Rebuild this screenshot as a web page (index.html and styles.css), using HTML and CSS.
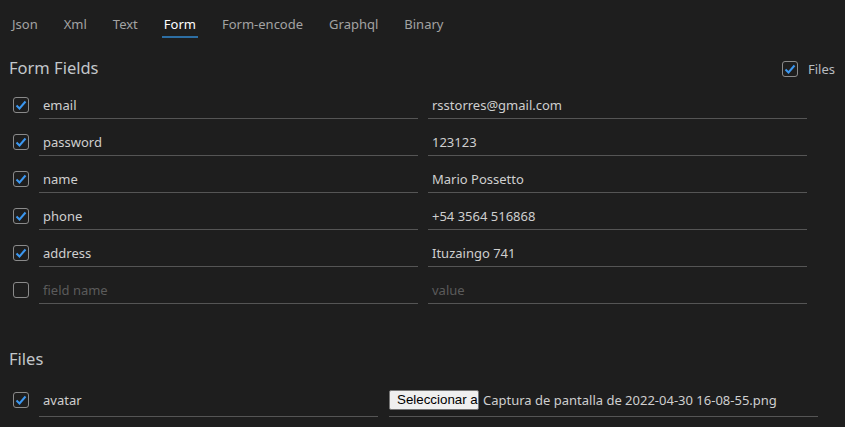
FILE: index.html
```html
<!DOCTYPE html>
<html>
<head>
<meta charset="utf-8">
<link rel="stylesheet" href="styles.css">
</head>
<body>
<div class="page">
  <nav class="tabs">
    <span class="tab">Json</span>
    <span class="tab">Xml</span>
    <span class="tab">Text</span>
    <span class="tab active">Form</span>
    <span class="tab">Form-encode</span>
    <span class="tab">Graphql</span>
    <span class="tab">Binary</span>
  </nav>

  <div class="section-head">
    <h2 class="title">Form Fields</h2>
    <label class="toggle">
      <span class="cb checked"><svg viewBox="0 0 16 16"><polyline points="3.5,8.5 6.5,11.5 12.5,4.5"/></svg></span>
      <span class="toggle-label">Files</span>
    </label>
  </div>

  <div class="rows">
    <div class="row">
      <span class="cb checked"><svg viewBox="0 0 16 16"><polyline points="3.5,8.5 6.5,11.5 12.5,4.5"/></svg></span>
      <div class="field">email</div>
      <div class="field">rsstorres@gmail.com</div>
    </div>
    <div class="row">
      <span class="cb checked"><svg viewBox="0 0 16 16"><polyline points="3.5,8.5 6.5,11.5 12.5,4.5"/></svg></span>
      <div class="field">password</div>
      <div class="field">123123</div>
    </div>
    <div class="row">
      <span class="cb checked"><svg viewBox="0 0 16 16"><polyline points="3.5,8.5 6.5,11.5 12.5,4.5"/></svg></span>
      <div class="field">name</div>
      <div class="field">Mario Possetto</div>
    </div>
    <div class="row">
      <span class="cb checked"><svg viewBox="0 0 16 16"><polyline points="3.5,8.5 6.5,11.5 12.5,4.5"/></svg></span>
      <div class="field">phone</div>
      <div class="field">+54 3564 516868</div>
    </div>
    <div class="row">
      <span class="cb checked"><svg viewBox="0 0 16 16"><polyline points="3.5,8.5 6.5,11.5 12.5,4.5"/></svg></span>
      <div class="field">address</div>
      <div class="field">Ituzaingo 741</div>
    </div>
    <div class="row">
      <span class="cb"></span>
      <div class="field placeholder">field name</div>
      <div class="field placeholder">value</div>
    </div>
  </div>

  <div class="section-head files-head">
    <h2 class="title">Files</h2>
  </div>

  <div class="file-row">
    <span class="cb checked"><svg viewBox="0 0 16 16"><polyline points="3.5,8.5 6.5,11.5 12.5,4.5"/></svg></span>
    <div class="field fname">avatar</div>
    <div class="field ffile">
      <span class="file-btn"><span class="file-btn-text">Seleccionar archivo</span></span>
      <span class="file-name">Captura de pantalla de 2022-04-30 16-08-55.png</span>
    </div>
  </div>
</div>
</body>
</html>
```

FILE: styles.css
```css
* { box-sizing: border-box; }
html, body {
  margin: 0;
  padding: 0;
  background: #1e1e1e;
  height: 100%;
  overflow: hidden;
}
body {
  font-family: "Noto Sans", "Open Sans", sans-serif;
  color: #cccccc;
  font-size: 13px;
}
.page {
  padding: 0 10px 0 9px;
}
.tabs {
  display: flex;
  gap: 22px;
  padding-left: 1px;
  height: 38px;
}
.tab {
  padding: 14px 2px 2px;
  line-height: 20px;
  color: #a3a3a3;
  border-bottom: 2px solid transparent;
}
.tab.active {
  color: #ffffff;
  border-bottom-color: #2d6ea3;
}
.section-head {
  display: flex;
  align-items: center;
  justify-content: space-between;
  margin-top: 18px;
  height: 24px;
}
.title {
  margin: 0;
  font-size: 16.5px;
  font-weight: 400;
  line-height: 24px;
  color: #c3c7cb;
}
.toggle {
  display: flex;
  align-items: center;
  gap: 10px;
  padding-top: 1px;
}
.toggle-label {
  color: #b8bcc0;
  font-size: 13px;
}
.cb {
  display: inline-flex;
  width: 16px;
  height: 16px;
  border: 1px solid #8a8a8a;
  border-radius: 3px;
  flex: none;
  align-items: center;
  justify-content: center;
}
.cb svg {
  width: 16px;
  height: 16px;
  margin: -1px;
  fill: none;
  stroke: #3b97f0;
  stroke-width: 2;
}
.rows {
  margin-top: 7px;
}
.row {
  display: flex;
  align-items: center;
  height: 37px;
  padding-left: 4px;
}
.row .cb {
  margin-right: 10px;
  margin-top: -1px;
}
.field {
  width: 379px;
  height: 27px;
  border-bottom: 1px solid #555555;
  padding: 0 4px;
  line-height: 26px;
  color: #cfcfcf;
  white-space: nowrap;
  overflow: hidden;
}
.row .field + .field {
  margin-left: 10px;
}
.field.placeholder {
  color: #5b5b5b;
}
.files-head {
  margin-top: 38px;
}
.file-row {
  display: flex;
  align-items: center;
  margin-top: 13px;
  padding-left: 4px;
}
.file-row .cb {
  margin-right: 10px;
  margin-top: -1px;
}
.field.fname {
  width: 339px;
  height: 33px;
  line-height: 32px;
}
.field.ffile {
  width: 429px;
  height: 33px;
  margin-left: 11px;
  padding: 0;
  display: flex;
  align-items: center;
  gap: 4px;
  padding-bottom: 1px;
}
.file-btn {
  display: block;
  width: 90px;
  height: 20px;
  overflow: hidden;
  white-space: nowrap;
  background: #efefef;
  border: 1px solid #767676;
  border-radius: 2px;
  color: #000;
  font-family: "Liberation Sans", Arial, sans-serif;
  font-size: 13.33px;
  line-height: 18px;
  padding-left: 7px;
  flex: none;
}
.file-btn-text {
  display: inline-block;
}
.file-name {
  color: #cfcfcf;
  line-height: 20px;
}
```
